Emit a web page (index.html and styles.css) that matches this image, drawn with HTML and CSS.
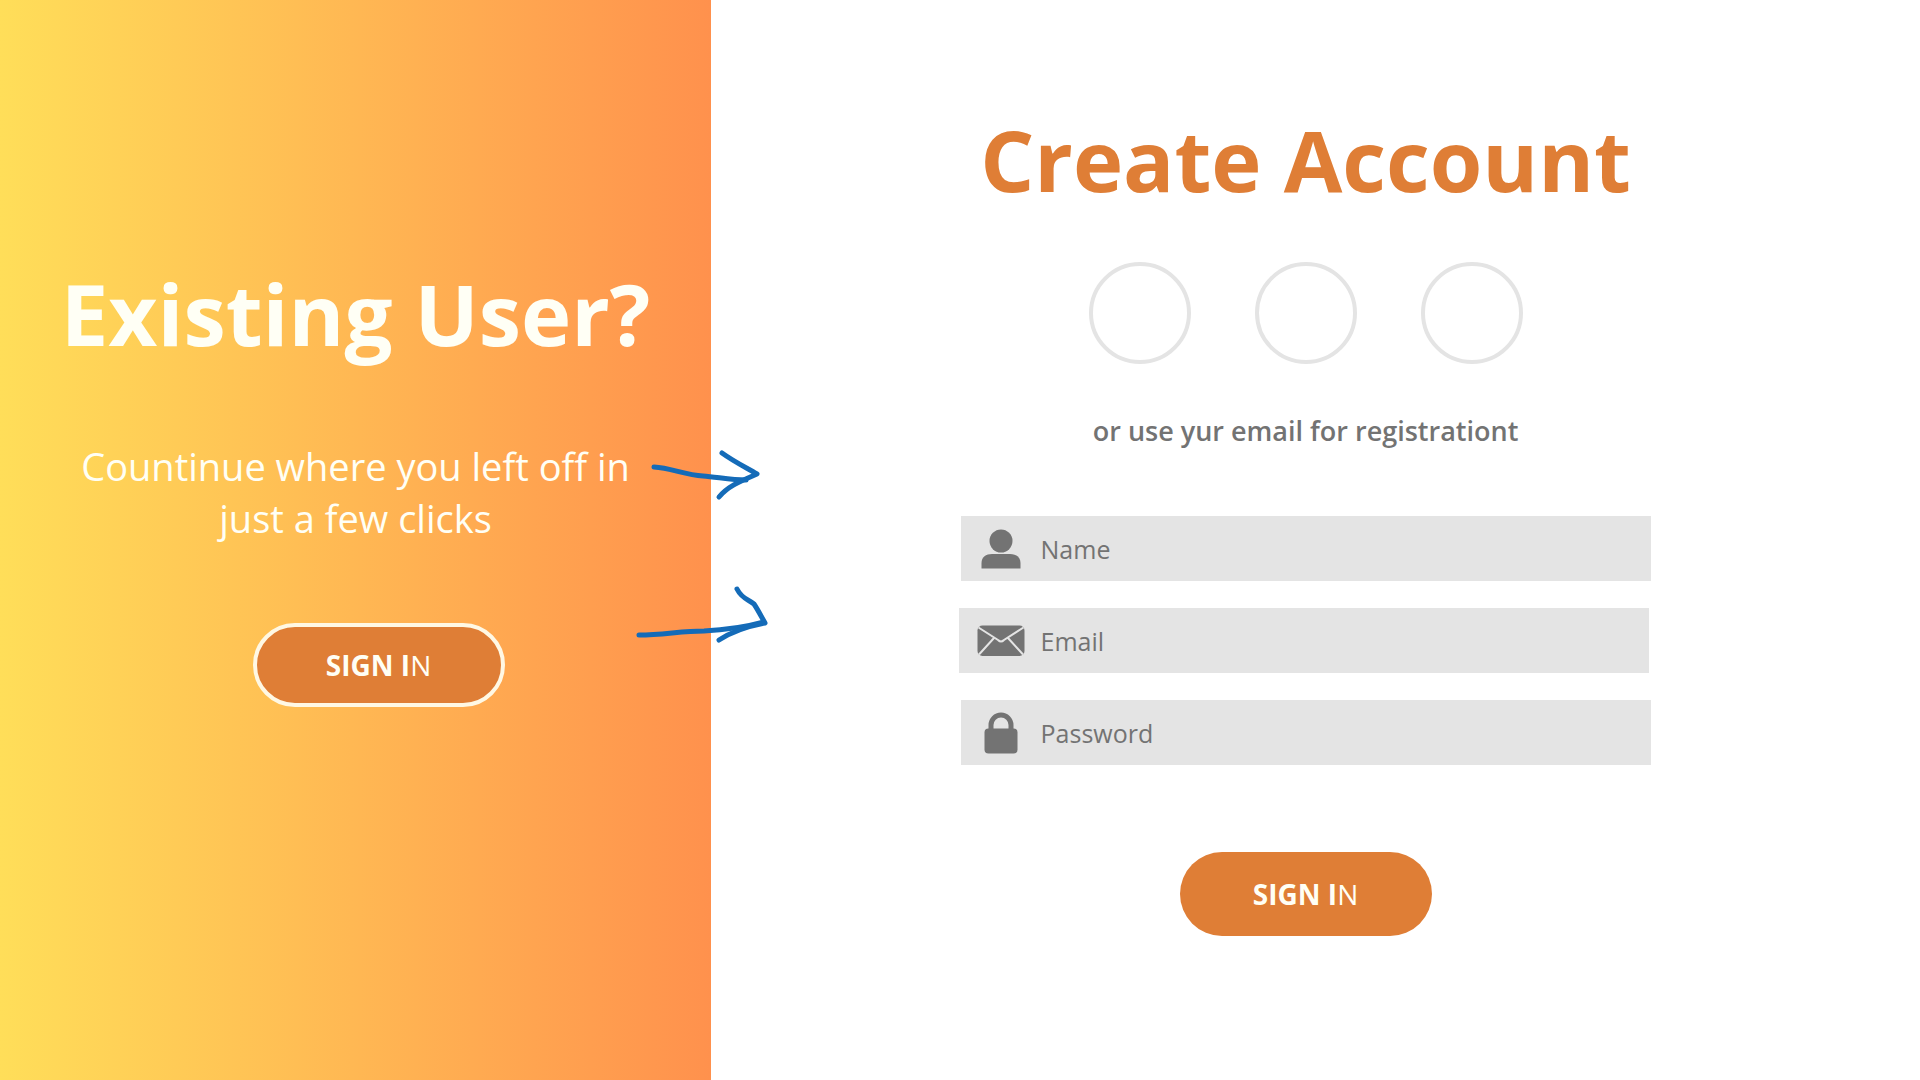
FILE: index.html
```html
<!DOCTYPE html>
<html lang="en">
<head>
<meta charset="utf-8">
<meta name="viewport" content="width=device-width, initial-scale=1">
<title>Create Account</title>
<link rel="stylesheet" href="styles.css">
</head>
<body>
<main class="page">
  <section class="welcome">
    <h1 class="title">Existing User?</h1>
    <p class="lead">Countinue where you left off in just a few clicks</p>
    <button class="pill pill-outlined" type="button"><strong>SIGN I</strong>N</button>
    <svg class="arrows" viewBox="0 0 140 180" aria-hidden="true">
      <path d="M3 17 C20 18 34 25 52 26 C66 27 80 30 95 30"/>
      <path d="M71 3 C82 11 94 17 106 24 C90 31 77 36 68 47"/>
      <path d="M-12 185 C12 185 30 181 53 181 C76 180 95 177 113 172"/>
      <path d="M86 139 C91 149 97 149 103 154 C107 160 110 166 114 173 C98 176 83 180 68 190"/>
    </svg>
  </section>
  <form class="signup">
    <h2 class="title title-accent">Create Account</h2>
    <div class="socials">
      <button class="social" type="button" aria-label="First provider"></button>
      <button class="social" type="button" aria-label="Second provider"></button>
      <button class="social" type="button" aria-label="Third provider"></button>
    </div>
    <p class="hint">or use yur email for registrationt</p>
    <div class="fields">
      <label class="field">
        <svg class="icon" viewBox="0 0 48 48" aria-hidden="true"><circle cx="24" cy="16" r="11.500"/><path d="M4.500 43.500V38C4.500 32 9 29 15 29H33C39 29 43.500 32 43.500 38V43.500Z"/></svg>
        <input class="input" type="text" placeholder="Name" aria-label="Name">
      </label>
      <label class="field field-email">
        <svg class="icon" viewBox="0 0 48 48" aria-hidden="true"><rect x="0.500" y="8.500" width="47" height="30.500" rx="5"/><path class="fold" d="M1.500 10.500L21 23Q24 26 27 23L46.500 10.500M17 21L2 37.500M31 21L46 37.500"/></svg>
        <input class="input" type="email" placeholder="Email" aria-label="Email">
      </label>
      <label class="field">
        <svg class="icon" viewBox="0 0 48 48" aria-hidden="true"><rect x="7.500" y="19.500" width="33" height="25" rx="4"/><path class="shackle" d="M14 22V16a10 10 0 0 1 20 0V22"/></svg>
        <input class="input" type="password" placeholder="Password" aria-label="Password">
      </label>
    </div>
    <button class="pill" type="submit"><strong>SIGN I</strong>N</button>
  </form>
</main>
</body>
</html>
```
FILE: styles.css
```css
* { box-sizing: border-box; }
body {
  margin: 0;
  font-family: "Open Sans", "Noto Sans", sans-serif;
  background: #fff;
  color: #737373;
}
.page {
  display: grid;
  grid-template-columns: 10fr 17fr;
  min-height: 100vh;
}
.welcome {
  position: relative;
  display: flex;
  flex-direction: column;
  align-items: center;
  min-width: 0;
  padding: 255px 60px 40px;
  background: linear-gradient(90deg, #ffde59, #ff914d);
  color: #fffff5;
  text-align: center;
}
.title {
  margin: 0;
  font-size: 85px;
  line-height: 116px;
  font-weight: 700;
  white-space: nowrap;
}
.title-accent { color: #df7e36; }
.lead {
  margin: 69px 0 0;
  max-width: 590px;
  font-size: 38px;
  line-height: 52px;
  font-weight: 400;
}
.pill {
  width: 252px;
  height: 84px;
  padding: 0;
  border: 0;
  border-radius: 42px;
  background: #df7e36;
  color: #fffff5;
  font-family: inherit;
  font-size: 28px;
  font-weight: 400;
  cursor: pointer;
}
.pill strong { font-weight: 700; }
.pill-outlined {
  margin: 79px 0 0 46px;
  border: 4px solid #fff8e4;
}
.arrows {
  position: absolute;
  left: calc(100% - 60px);
  top: 450px;
  width: 140px;
  height: 180px;
  overflow: visible;
  fill: none;
  stroke: #146bb8;
  stroke-width: 5;
  stroke-linecap: round;
  stroke-linejoin: round;
}
.signup {
  display: flex;
  flex-direction: column;
  align-items: center;
  min-width: 0;
  padding: 101px 20px 40px 0;
}
.socials {
  display: flex;
  gap: 64px;
  margin-top: 45px;
}
.social {
  width: 102px;
  height: 102px;
  padding: 0;
  border: 4px solid #e4e4e4;
  border-radius: 50%;
  background: #fff;
}
.hint {
  margin: 47px 0 0;
  font-size: 27px;
  line-height: 40px;
  font-weight: 600;
}
.fields {
  display: grid;
  gap: 27px;
  width: 100%;
  max-width: 690px;
  margin: 65px 0 87px;
}
.field {
  display: flex;
  align-items: center;
  gap: 16px;
  height: 65px;
  padding-left: 16px;
  background: #e4e4e4;
}
.field-email {
  margin: 0 2px 0 -2px;
  padding-left: 18px;
}
.icon {
  flex: none;
  width: 48px;
  height: 48px;
  fill: #737373;
}
.fold {
  fill: none;
  stroke: #e4e4e4;
  stroke-width: 2;
}
.shackle {
  fill: none;
  stroke: #737373;
  stroke-width: 5;
}
.input {
  flex: 1;
  min-width: 0;
  height: 100%;
  padding: 0;
  border: 0;
  background: none;
  color: #737373;
  font-family: inherit;
  font-size: 25px;
}
.input::placeholder { color: #737373; }
```
